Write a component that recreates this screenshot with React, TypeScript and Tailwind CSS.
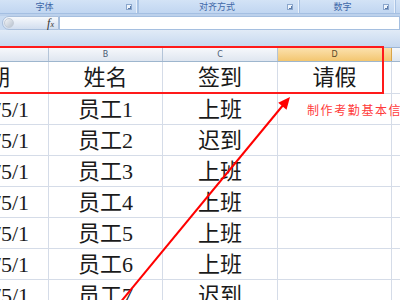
import React from "react";

const cellFont = { fontFamily: "'Liberation Serif', 'Noto Sans CJK SC', serif" };

const rows: [string, string, string][] = [
  ["2017/5/1", "员工1", "上班"],
  ["2017/5/1", "员工2", "迟到"],
  ["2017/5/1", "员工3", "上班"],
  ["2017/5/1", "员工4", "上班"],
  ["2017/5/1", "员工5", "上班"],
  ["2017/5/1", "员工6", "上班"],
  ["2017/5/1", "员工7", "迟到"],
];

function Launcher() {
  return (
    <div className="w-[6px] h-[6px] border border-[#8aa6cc] bg-[#eef4fb] flex items-end justify-end">
      <div className="w-[3px] h-[3px] border-r border-b border-[#5b7aa8]" />
    </div>
  );
}

function Row({ a, b, c, d, h }: { a: React.ReactNode; b: string; c: string; d?: string; h: string }) {
  return (
    <div className={`flex ${h} border-b border-[#d5dce8] text-[22px] text-[#1a1a1a]`} style={cellFont}>
      <div className="w-[49px] shrink-0 border-r border-[#d5dce8] overflow-hidden flex items-center justify-end whitespace-nowrap">
        {a}
      </div>
      <div className="w-[114px] shrink-0 border-r border-[#d5dce8] flex items-center justify-center">{b}</div>
      <div className="w-[115px] shrink-0 border-r border-[#d5dce8] flex items-center justify-center">{c}</div>
      <div className="w-[114px] shrink-0 border-r border-[#d5dce8] flex items-center justify-center">{d}</div>
      <div className="flex-1" />
    </div>
  );
}

export default function App() {
  return (
    <div className="relative w-[400px] h-[300px] overflow-hidden bg-white" style={{ fontFamily: "'Noto Sans CJK SC', sans-serif" }}>
      {/* Ribbon group labels */}
      <div className="flex h-[13px] bg-gradient-to-b from-[#d3e3f6] to-[#c1d6f1] text-[9px] leading-[13px] text-[#3f68a8]">
        <div className="-ml-[37px] w-[174px] shrink-0 flex items-center pr-[4px] border-r border-[#e8f0fa]">
          <div className="flex-1 text-center">字体</div>
          <Launcher />
        </div>
        <div className="w-[2px] bg-[#a9c3e4] shrink-0" />
        <div className="w-[160px] shrink-0 flex items-center pr-[5px] border-r border-[#e8f0fa]">
          <div className="flex-1 text-center pl-[8px]">对齐方式</div>
          <Launcher />
        </div>
        <div className="w-[1px] bg-[#a9c3e4] shrink-0" />
        <div className="w-[95px] shrink-0 flex items-center pr-[5px] border-r border-[#e8f0fa]">
          <div className="flex-1 text-center pl-[2px]">数字</div>
          <Launcher />
        </div>
        <div className="flex-1 border-l border-[#a9c3e4]" />
      </div>
      <div className="h-[3px] bg-[#bcd1ec] border-t border-[#a4bfe2]" />
      {/* Formula bar */}
      <div className="flex h-[14px] bg-[#c9dbf1]">
        <div className="w-[57px] shrink-0 flex items-center rounded-l-[7px] border border-[#a9bfdc] bg-gradient-to-b from-[#f7f9fc] to-[#d2deef] ml-[2px]">
          <div className="w-[10px] h-[10px] rounded-full bg-gradient-to-br from-[#f2f4f7] to-[#b8c2cf] border border-[#c5ccd6] ml-[1px]" />
          <div className="flex-1" />
          <span className="text-[12px] italic text-[#333] mr-[4px] leading-none" style={{ fontFamily: "'Liberation Serif', serif" }}>
            f<span className="text-[8px]">x</span>
          </span>
        </div>
        <div className="flex-1 bg-white border border-[#a5bfe0]" />
      </div>
      <div className="h-[18px] bg-gradient-to-b from-[#e1ebf7] to-[#c6d8ef] border-b border-[#9db6d6]" />
      {/* Column headers */}
      <div className="flex h-[14px] text-[8px] leading-[13px] text-[#4a5a74] bg-gradient-to-b from-[#f6f8fb] to-[#dfe6f0] border-b border-[#9eb6ce]" style={{ fontFamily: "'DejaVu Sans', sans-serif" }}>
        <div className="w-[49px] shrink-0 border-r border-[#b3c4d8]" />
        <div className="w-[114px] shrink-0 border-r border-[#b3c4d8] text-center">B</div>
        <div className="w-[115px] shrink-0 border-r border-[#b3c4d8] text-center">C</div>
        <div className="w-[114px] shrink-0 border-r border-[#d9a54a] text-center bg-gradient-to-b from-[#fbe1ad] to-[#f3c66f] text-[#5a4a2a]">D</div>
        <div className="flex-1" />
      </div>
      {/* Data */}
      <Row h="h-[32px]" a={<span className="pr-[38px]">日期</span>} b="姓名" c="签到" d="请假" />
      {rows.map((r, i) => (
        <Row key={i} h="h-[31px]" a={<span className="pr-[19px]">{r[0]}</span>} b={r[1]} c={r[2]} />
      ))}

      {/* Red rectangle overlay */}
      <div className="absolute left-[-6px] top-[46px] w-[390px] h-[48px] border-2 border-[#ff1a1a]" />

      {/* Annotation text */}
      <div className="absolute left-[307px] top-[101px] text-[12px] tracking-[1.6px] whitespace-nowrap text-[#ff3b3b]">制作考勤基本信息</div>

      {/* Arrow */}
      <svg className="absolute left-0 top-0" width="400" height="300" viewBox="0 0 400 300">
        <line x1="119" y1="304" x2="284" y2="104" stroke="#ff0000" strokeWidth="2" />
        <polygon points="290,97 286.5,109.8 278.2,102.8" fill="#ff0000" />
      </svg>
    </div>
  );
}
